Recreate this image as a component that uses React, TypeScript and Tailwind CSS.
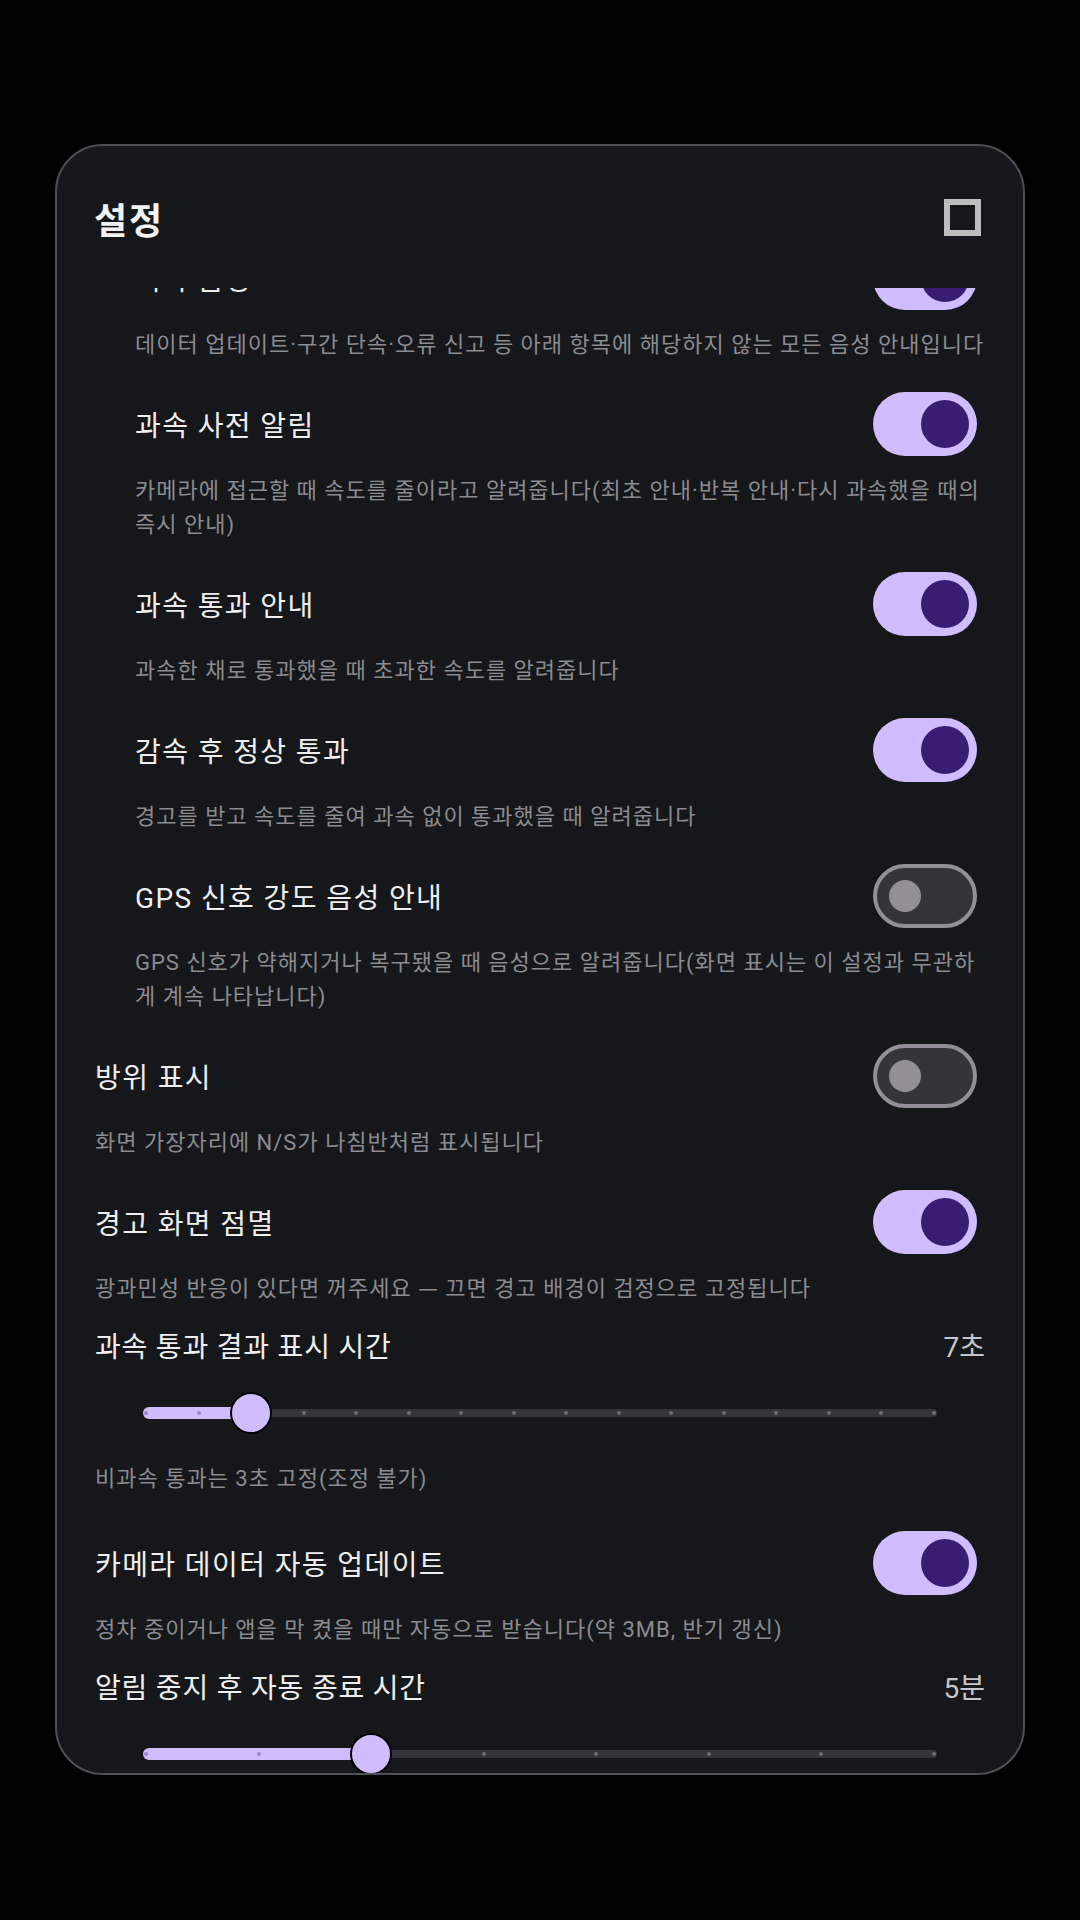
import React from "react";

type ToggleItem = {
	kind: "toggle";
	label: string;
	desc: React.ReactNode;
	on: boolean;
	indent?: boolean;
};

type SliderItem = {
	kind: "slider";
	label: string;
	value: string;
	steps: number;
	index: number;
	desc?: string;
};

type Item = ToggleItem | SliderItem;

const items: Item[] = [
	{
		kind: "toggle",
		indent: true,
		label: "기타 음성",
		on: true,
		desc: "데이터 업데이트·구간 단속·오류 신고 등 아래 항목에 해당하지 않는 모든 음성 안내입니다",
	},
	{
		kind: "toggle",
		indent: true,
		label: "과속 사전 알림",
		on: true,
		desc: "카메라에 접근할 때 속도를 줄이라고 알려줍니다(최초 안내·반복 안내·다시 과속했을 때의 즉시 안내)",
	},
	{
		kind: "toggle",
		indent: true,
		label: "과속 통과 안내",
		on: true,
		desc: "과속한 채로 통과했을 때 초과한 속도를 알려줍니다",
	},
	{
		kind: "toggle",
		indent: true,
		label: "감속 후 정상 통과",
		on: true,
		desc: "경고를 받고 속도를 줄여 과속 없이 통과했을 때 알려줍니다",
	},
	{
		kind: "toggle",
		indent: true,
		label: "GPS 신호 강도 음성 안내",
		on: false,
		desc: "GPS 신호가 약해지거나 복구됐을 때 음성으로 알려줍니다(화면 표시는 이 설정과 무관하게 계속 나타납니다)",
	},
	{
		kind: "toggle",
		label: "방위 표시",
		on: false,
		desc: "화면 가장자리에 N/S가 나침반처럼 표시됩니다",
	},
	{
		kind: "toggle",
		label: "경고 화면 점멸",
		on: true,
		desc: (
			<>
				광과민성 반응이 있다면 꺼주세요{" "}
				<span className="leading-[0] font-['Noto_Sans_CJK_KR',sans-serif]">—</span> 끄면 경고
				배경이 검정으로 고정됩니다
			</>
		),
	},
	{
		kind: "slider",
		label: "과속 통과 결과 표시 시간",
		value: "7초",
		steps: 16,
		index: 2,
		desc: "비과속 통과는 3초 고정(조정 불가)",
	},
	{
		kind: "toggle",
		label: "카메라 데이터 자동 업데이트",
		on: true,
		desc: "정차 중이거나 앱을 막 켰을 때만 자동으로 받습니다(약 3MB, 반기 갱신)",
	},
	{
		kind: "slider",
		label: "알림 중지 후 자동 종료 시간",
		value: "5분",
		steps: 8,
		index: 2,
	},
];

const Switch = ({ on }: { on: boolean }) =>
	on ? (
		<div className="w-[104px] h-[64px] rounded-full bg-[#d0bcff] flex items-center justify-end pr-[8px] shrink-0 mr-[8px]">
			<div className="w-[48px] h-[48px] rounded-full bg-[#381e72]" />
		</div>
	) : (
		<div className="w-[104px] h-[64px] rounded-full bg-[#36343b] border-[4px] border-[#938f99] flex items-center pl-[12px] shrink-0 mr-[8px]">
			<div className="w-[32px] h-[32px] rounded-full bg-[#938f99]" />
		</div>
	);

// track is 794px wide, tick dots run from 3px to 791px
const TRACK_W = 794;

const Slider = ({ steps, index }: { steps: number; index: number }) => {
	const step = (TRACK_W - 6) / (steps - 1);
	const thumbX = 3 + index * step;
	return (
		<div className="relative h-[48px] mx-[48px]">
			<div className="absolute inset-x-0 top-[20px] h-[8px] rounded-[4px] bg-[#36343b]" />
			<div
				className="absolute left-0 top-[18px] h-[12px] rounded-l-full bg-[#d0bcff]"
				style={{ width: thumbX }}
			/>
			{Array.from({ length: steps }).map((_, i) => (
				<div
					key={i}
					className={`absolute top-[22px] w-[4px] h-[4px] rounded-full ${
						i <= index ? "bg-[#9a84d8]" : "bg-[#6c6a72]"
					}`}
					style={{ left: 3 + i * step - 2 }}
				/>
			))}
			<div
				className="absolute top-[3px] w-[42px] h-[42px] rounded-full bg-[#d0bcff] border-[2px] border-black"
				style={{ left: thumbX - 21 }}
			/>
		</div>
	);
};

const Desc = ({ children, indent }: { children: React.ReactNode; indent?: boolean }) => (
	<p
		className={`mt-[18px] text-[22px] leading-[34px] tracking-[1px] text-[#8b8b90] ${
			indent ? "pl-[40px]" : ""
		}`}
	>
		{children}
	</p>
);

export default function App() {
	return (
		<div
			className="min-h-[1920px] bg-black pt-[144px]"
			style={{ fontFamily: 'Roboto, "Noto Sans CJK KR", sans-serif' }}
		>
			<div className="mx-auto w-[970px] h-[1631px] rounded-[48px] border-2 border-[#4f4f54] bg-[#16171b] flex flex-col overflow-hidden">
				{/* Header */}
				<div className="flex items-center justify-between pl-[37px] pr-[42px] h-[56px] mt-[48px] shrink-0">
					<h1 className="text-[36px] font-bold tracking-[2px] text-[#f2f2f2]">설정</h1>
					<div className="w-[37px] h-[37px] border-[6px] border-[#bdbdbd] mb-[10px]" />
				</div>

				{/* Scrolled settings list */}
				<div className="flex-1 overflow-hidden mt-[38px]">
					<div className="px-[38px] mt-[-42px]">
						{items.map((item, i) => {
							const prev = items[i - 1];
							let mt = "";
							if (i > 0) {
								if (item.kind === "slider") mt = "mt-[19px]";
								else if (prev?.kind === "slider") mt = "mt-[35px]";
								else mt = "mt-[30px]";
							}
							if (item.kind === "toggle") {
								return (
									<div key={i} className={mt}>
										<div
											className={`h-[64px] flex items-center justify-between ${
												item.indent ? "pl-[40px]" : ""
											}`}
										>
											<span className="pt-[5px] text-[28px] tracking-[1.4px] text-[#efefef]">
												{item.label}
											</span>
											<Switch on={item.on} />
										</div>
										<Desc indent={item.indent}>{item.desc}</Desc>
									</div>
								);
							}
							return (
								<div key={i} className={mt}>
									<div className="h-[40px] flex items-center justify-between">
										<span className="pt-[5px] text-[28px] tracking-[0.8px] text-[#efefef]">
											{item.label}
										</span>
										<span className="pt-[5px] text-[28px] text-[#c6c6ca]">{item.value}</span>
									</div>
									<div className="mt-[24px]">
										<Slider steps={item.steps} index={item.index} />
									</div>
									{item.desc && (
										<p className="mt-[25px] text-[22px] leading-[34px] tracking-[1px] text-[#8b8b90]">
											{item.desc}
										</p>
									)}
								</div>
							);
						})}
					</div>
				</div>
			</div>
		</div>
	);
}
